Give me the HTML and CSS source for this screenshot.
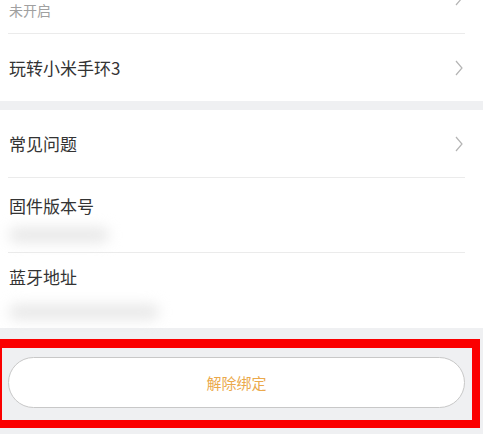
FILE: index.html
```html
<!DOCTYPE html>
<html lang="zh-CN">
<head>
    <meta charset="UTF-8">
    <meta name="viewport" content="width=device-width, initial-scale=1.0">
    <title>设备设置</title>
    <link rel="stylesheet" href="styles.css">
</head>
<body>

<div class="group">
    <div class="row row-top">
        <span class="sub">未开启</span>
        <svg class="arrow arrow-top" width="8" height="16" viewBox="0 0 8 16"><path d="M1 1 L7 8 L1 15" /></svg>
    </div>
    <div class="line"></div>
    <div class="row">
        <span class="title">玩转小米手环3</span>
        <svg class="arrow" width="8" height="16" viewBox="0 0 8 16"><path d="M1 1 L7 8 L1 15" /></svg>
    </div>
</div>

<div class="group">
    <div class="row">
        <span class="title">常见问题</span>
        <svg class="arrow" width="8" height="16" viewBox="0 0 8 16"><path d="M1 1 L7 8 L1 15" /></svg>
    </div>
    <div class="line"></div>
    <div class="row row-info">
        <span class="title">固件版本号</span>
        <div class="blur blur-short"></div>
    </div>
    <div class="line"></div>
    <div class="row row-info row-last">
        <span class="title">蓝牙地址</span>
        <div class="blur blur-long"></div>
    </div>
</div>

<div class="mark">
    <button class="unbind">解除绑定</button>
</div>

</body>
</html>
```

FILE: styles.css
```css
body {
    margin: 0;
    background-color: #eff0f2;
    font-family: "Noto Sans CJK SC", "Noto Sans", sans-serif;
    color: #333;
    overflow: hidden;
}
.group {
    background-color: #fff;
    margin-bottom: 9px;
}
.row {
    display: flex;
    align-items: center;
    justify-content: space-between;
    height: 67px;
    padding: 0 20px 0 9px;
}
.row-top {
    height: 33px;
    align-items: flex-start;
}
.sub {
    font-size: 14px;
    line-height: 18px;
    color: #a0a0a0;
    margin-top: 1px;
}
.arrow-top {
    margin-top: -10px;
}
.title {
    font-size: 17px;
    line-height: 24px;
}
.arrow path {
    fill: none;
    stroke: #b4b4b4;
    stroke-width: 1.2;
}
.line {
    height: 1px;
    margin: 0 18px 0 8px;
    background-color: #ebebeb;
}
.row-info {
    flex-direction: column;
    align-items: flex-start;
    justify-content: flex-start;
    height: 74px;
    padding-top: 16px;
    box-sizing: border-box;
}
.row-last {
    height: 75px;
    padding-top: 12px;
}
.blur {
    height: 14px;
    margin-top: 10px;
    background-color: #e6e6e6;
    filter: blur(7px);
    border-radius: 7px;
}
.blur-short {
    width: 100px;
}
.blur-long {
    width: 150px;
    margin-top: 16px;
}
.mark {
    margin: 11px 3px 0 0;
    border: solid #fb0000;
    border-width: 9px 8px 8px 2px;
    padding: 9px 7px 12px 6px;
}
.unbind {
    display: block;
    width: 100%;
    height: 51px;
    background-color: #fff;
    border: 1px solid #c8c8c8;
    border-radius: 26px;
    font-family: "Noto Sans CJK SC", sans-serif;
    font-size: 15px;
    color: #eba94c;
}
```
